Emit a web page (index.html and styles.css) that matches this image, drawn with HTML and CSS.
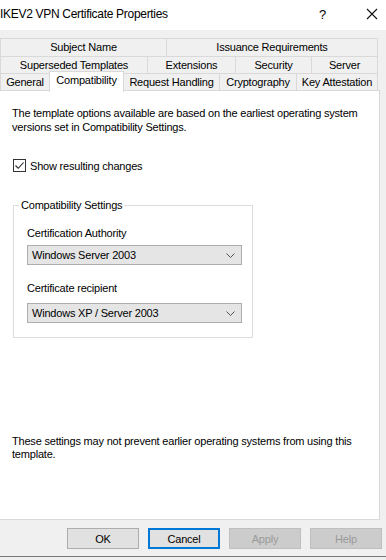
FILE: index.html
```html
<!DOCTYPE html>
<html lang="en">
<head>
    <meta charset="UTF-8">
    <title>IKEV2 VPN Certificate Properties</title>
    <link rel="stylesheet" href="styles.css">
</head>
<body>
    <div class="window">
        <div class="titlebar">
            <span class="title">IKEV2 VPN Certificate Properties</span>
            <span class="help">?</span>
            <span class="close">
                <svg width="12" height="12" viewBox="0 0 12 12"><path d="M1 1 L11 11 M11 1 L1 11" stroke="#111" stroke-width="1.1" fill="none"/></svg>
            </span>
        </div>

        <div class="tabs">
            <div class="tab-row">
                <div class="tab tab-subject">Subject Name</div>
                <div class="tab tab-issuance">Issuance Requirements</div>
            </div>
            <div class="tab-row">
                <div class="tab tab-superseded">Superseded Templates</div>
                <div class="tab tab-extensions">Extensions</div>
                <div class="tab tab-security">Security</div>
                <div class="tab tab-server">Server</div>
            </div>
            <div class="tab-row">
                <div class="tab tab-general">General</div>
                <div class="tab tab-compat selected">Compatibility</div>
                <div class="tab tab-request">Request Handling</div>
                <div class="tab tab-crypto">Cryptography</div>
                <div class="tab tab-key">Key Attestation</div>
            </div>
        </div>

        <div class="panel">
            <p class="intro">The template options available are based on the earliest operating system versions set in Compatibility Settings.</p>

            <label class="check">
                <span class="box">
                    <svg width="11" height="11" viewBox="0 0 11 11"><path d="M1.5 5.5 L4.2 8.3 L9.6 2.5" stroke="#222" stroke-width="1.1" fill="none"/></svg>
                </span>
                Show resulting changes
            </label>

            <fieldset class="group">
                <legend>Compatibility Settings</legend>
                <div class="field-label">Certification Authority</div>
                <div class="combo">
                    <span>Windows Server 2003</span>
                    <svg width="9" height="5" viewBox="0 0 9 5"><path d="M0.5 0.5 L4.5 4.5 L8.5 0.5" stroke="#555" stroke-width="1" fill="none"/></svg>
                </div>
                <div class="field-label second">Certificate recipient</div>
                <div class="combo second">
                    <span>Windows XP / Server 2003</span>
                    <svg width="9" height="5" viewBox="0 0 9 5"><path d="M0.5 0.5 L4.5 4.5 L8.5 0.5" stroke="#555" stroke-width="1" fill="none"/></svg>
                </div>
            </fieldset>

            <p class="note">These settings may not prevent earlier operating systems from using this template.</p>
        </div>

        <div class="buttons">
            <button class="btn">OK</button>
            <button class="btn default">Cancel</button>
            <button class="btn" disabled>Apply</button>
            <button class="btn" disabled>Help</button>
        </div>
    </div>
</body>
</html>
```

FILE: styles.css
```css
body {
    margin: 0;
    padding: 0;
    font-family: "Liberation Sans", Arial, sans-serif;
    font-size: 11px;
    letter-spacing: -0.2px;
    color: #000;
}
.window {
    width: 386px;
    height: 560px;
    background: #f0f0f0;
    display: flex;
    flex-direction: column;
    overflow: hidden;
    box-sizing: border-box;
    border-bottom: 3px solid #f0f0f0;
    box-shadow: inset 0 -1px 0 #777;
}
.titlebar {
    height: 30px;
    background: #fff;
    display: flex;
    align-items: center;
    flex-shrink: 0;
}
.title {
    font-size: 12px;
    letter-spacing: -0.3px;
    flex: 1;
    padding-bottom: 2px;
}
.help {
    font-size: 13px;
    width: 10px;
    margin-right: 37px;
    padding-bottom: 2px;
}
.close {
    width: 20px;
    display: flex;
    padding-bottom: 2px;
}
.tabs {
    margin-top: 8px;
    flex-shrink: 0;
}
.tab-row {
    display: flex;
    height: 18px;
}
.tab-row + .tab-row {
    margin-top: -1px;
}
.tab-row:first-child {
    height: 19px;
}
.tab {
    box-sizing: border-box;
    border: 1px solid #d9d9d9;
    margin-right: -1px;
    background: #f0f0f0;
    text-align: center;
    line-height: 16px;
    white-space: nowrap;
}
.tab-row:first-child .tab {
    line-height: 17px;
}
.tab-subject { width: 167px; }
.tab-issuance { width: 212px; }
.tab-superseded { width: 148px; }
.tab-extensions { width: 89px; }
.tab-security { width: 77px; }
.tab-server { width: 67px; }
.tab-general { width: 50px; }
.tab-compat { width: 75px; }
.tab-request { width: 97px; }
.tab-crypto { width: 78px; }
.tab-key { width: 82px; }
.tab.selected {
    background: #fff;
    position: relative;
    z-index: 1;
    height: 21px;
    margin-top: -2px;
    border-bottom: none;
    line-height: 17px;
}
.panel {
    flex: 1;
    margin: -1px 6px 0 0;
    background: #fff;
    border: 1px solid #d9d9d9;
    border-left: none;
    padding: 0 6px 0 12px;
    display: flex;
    flex-direction: column;
}
.intro {
    margin: 15px 0 0;
    line-height: 14px;
}
.check {
    display: flex;
    align-items: center;
    margin-top: 25px;
    gap: 4px;
}
.box {
    width: 13px;
    height: 13px;
    box-sizing: border-box;
    border: 1px solid #333;
    display: flex;
    align-items: center;
    justify-content: center;
    margin-left: 1px;
}
.group {
    margin: 27px 0 0 1px;
    width: 240px;
    box-sizing: border-box;
    border: 1px solid #dcdcdc;
    padding: 0 10px 12px 13px;
    height: 139px;
}
.group legend {
    padding: 0 2px;
    margin-left: -8px;
}
.field-label {
    margin-top: 15px;
    line-height: 14px;
}
.combo {
    margin-top: 5px;
    height: 20px;
    box-sizing: border-box;
    background: #e5e5e5;
    border: 1px solid #adadad;
    display: flex;
    align-items: center;
    justify-content: space-between;
    padding: 0 6px 0 4px;
}
.field-label.second {
    margin-top: 16px;
}
.combo.second {
    margin-top: 8px;
}
.note {
    margin: auto 0 58px;
    line-height: 13px;
}
.buttons {
    display: flex;
    justify-content: flex-end;
    gap: 9px;
    padding: 8px 4px 8px 0;
}
.btn {
    width: 72px;
    height: 21px;
    box-sizing: border-box;
    background: #e1e1e1;
    border: 1px solid #adadad;
    font-family: inherit;
    font-size: 11px;
    letter-spacing: -0.2px;
    color: #000;
    padding: 0;
}
.btn.default {
    border: 2px solid #0078d7;
}
.btn:disabled {
    background: #cccccc;
    border-color: #bfbfbf;
    color: #9a9a9a;
}
```
